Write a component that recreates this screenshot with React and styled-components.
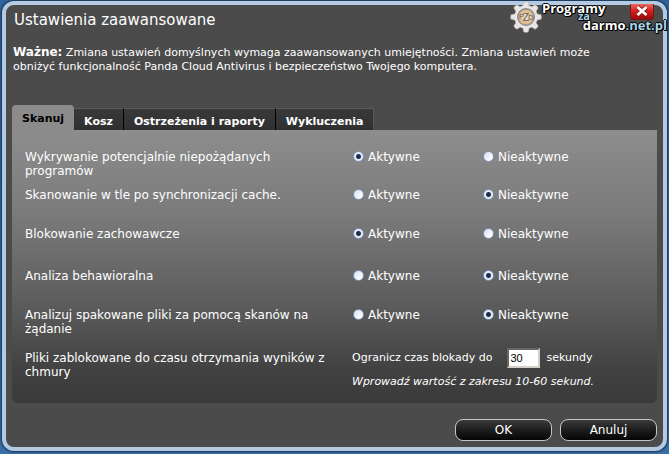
import React, { useState } from 'react';
import styled, { createGlobalStyle, css } from 'styled-components';

const GlobalStyle = createGlobalStyle`
  *, *::before, *::after { box-sizing: border-box; }
  html, body, #root { height: 100%; }
  body {
    margin: 0;
    background: linear-gradient(#31629c, #3a6ea8);
    font-family: 'DejaVu Sans', Verdana, sans-serif;
    font-size: 12px;
    line-height: 14px;
    color: #fff;
  }
  button, input { font: inherit; color: inherit; }
`;

const Desktop = styled.div`
  min-height: 100%;
  display: flex;
  padding: 1px 2px 3px;
`;

const Dialog = styled.main`
  position: relative;
  flex: 1;
  display: flex;
  flex-direction: column;
  padding: 6px;
  border: 4px solid #b4c9e2;
  border-radius: 12px;
  background: #4b4b4b;
  box-shadow: 0 0 2px 1px #17304f;
`;

const Title = styled.h1`
  margin: 0;
  padding: 0 2px;
  font-size: 15px;
  font-weight: 400;
  line-height: 18px;
`;

const Notice = styled.p`
  margin: 16px 0 0;
  padding: 0 1px;
  max-width: 610px;
  font-size: 11px;
  line-height: 14px;
`;

const Strong = styled.strong`
  font-size: 12px;
`;

const TabBar = styled.div`
  display: flex;
  align-items: flex-end;
  margin-top: 31px;
`;

const Tab = styled.button`
  height: 22px;
  padding: 4px 10px 0;
  border: 0;
  border-top: 1px solid #5c5c5c;
  border-right: 1px solid ${(p) => (p.$last ? '#555' : '#000')};
  background: linear-gradient(#393939, #303030);
  font-size: 11px;
  font-weight: 700;
  line-height: 14px;
  ${(p) => p.$active && css`
    height: 25px;
    padding-bottom: 1px;
    border: 0;
    border-radius: 4px 4px 0 0;
    background: #8b8b8b;
    color: #000;
  `}
`;

const Panel = styled.section`
  display: grid;
  grid-template-rows: 38px 39px 42px 39px 43px auto;
  padding: 20px 13px 14px;
  border-radius: 0 0 6px 6px;
  background: linear-gradient(#8d8d8d, #7b7b7b 30%, #5b5b5b 65%, #414141 88%, #3a3a3a);
`;

const Row = styled.div`
  display: grid;
  grid-template-columns: 327px 1fr;
  align-items: start;
`;

const RowLabel = styled.span`
  max-width: ${(p) => (p.$narrow ? '280px' : '320px')};
`;

const Options = styled.div`
  display: grid;
  grid-template-columns: 130px 1fr;
  padding-left: 1px;
`;

const Option = styled.label`
  display: flex;
  align-items: center;
  gap: 4px;
`;

const Radio = styled.input`
  appearance: none;
  width: 11px;
  height: 11px;
  margin: 0 0 1px;
  border: 1px solid #7f94bd;
  border-radius: 50%;
  background: linear-gradient(135deg, #d3dcf0, #fff 80%);
  &:checked {
    background: radial-gradient(circle, #1d2f4b 0 2px, #e6ecf8 3px);
  }
`;

const Limit = styled.div`
  display: flex;
  flex-direction: column;
  gap: 7px;
  font-size: 11px;
`;

const LimitLine = styled.label`
  display: flex;
  align-items: center;
  height: 20px;
  margin-top: -3px;
`;

const NumberBox = styled.input`
  width: 33px;
  height: 20px;
  margin: 0 6px 0 15px;
  padding: 0 1px;
  border: 2px solid;
  border-color: #666 #d4d0c8 #d4d0c8 #666;
  background: #fff;
  color: #000;
  font: 11px 'Liberation Sans', Arial, sans-serif;
`;

const Footer = styled.footer`
  display: flex;
  justify-content: flex-end;
  gap: 8px;
  margin-top: 16px;
`;

const ActionButton = styled.button`
  width: 97px;
  height: 22px;
  padding: 0;
  border: 1px solid #c6c6c6;
  border-radius: 8px;
  background: linear-gradient(#3b3b3b, #1d1d1d 50%, #050505);
`;

const CloseButton = styled.button`
  position: absolute;
  top: -1px;
  right: 9px;
  display: flex;
  justify-content: center;
  width: 24px;
  height: 16px;
  padding: 1px 0 0;
  border: 1px solid #7c1717;
  border-top: 0;
  border-radius: 0 0 3px 3px;
  background: linear-gradient(#e66b60, #d92020 45%, #980a0a);
`;

const Watermark = styled.div`
  position: absolute;
  top: -4px;
  right: -4px;
  display: flex;
  align-items: flex-start;
  pointer-events: none;
`;

const BrandText = styled.div`
  display: grid;
  grid-template-rows: 9px 8px 14px;
  width: 125px;
  font: 700 13px/14px 'Open Sans', sans-serif;
  text-shadow: 1px 0 #000, -1px 0 #000, 0 1px #000, 0 -1px #000, 1px 1px #000;
`;

const BrandMiddle = styled.span`
  z-index: 1;
  padding-left: 36px;
  color: #a8d5e8;
  font-size: 11px;
  line-height: 12px;
`;

const BrandLast = styled.span`
  text-align: right;
`;

const BrandDomain = styled.span`
  color: #a8d5e8;
`;

const Cross = () => (
  <svg width="14" height="12" viewBox="0 0 14 12" aria-hidden="true">
    <path d="M2.5 2 11.5 10M11.5 2 2.5 10" stroke="#8a1010" strokeWidth="4.4" />
    <path d="M2.5 2 11.5 10M11.5 2 2.5 10" stroke="#fff" strokeWidth="3" />
  </svg>
);

const Gear = () => (
  <svg width="32" height="32" viewBox="0 0 34 34" aria-hidden="true">
    <defs>
      <radialGradient id="coin"><stop offset="0" stopColor="#f6e4c4" /><stop offset="1" stopColor="#d6ae78" /></radialGradient>
    </defs>
    <g fill="#e9e5e5" stroke="#aaa5a0" strokeWidth=".5">
      {[0, 45, 90, 135, 180, 225, 270, 315].map((a) => (
        <path key={a} d="M13.5 6 14.5 1Q17 0 19.5 1L20.5 6Z" transform={`rotate(${a} 17 17)`} />
      ))}
    </g>
    <circle cx="17" cy="17" r="12.4" fill="#e9e5e5" />
    <circle cx="17" cy="17" r="8.8" fill="url(#coin)" stroke="#85878f" strokeWidth="1.4" />
    <g fill="#535c70" fontFamily="Liberation Sans, sans-serif" textAnchor="middle">
      <text x="12.2" y="19.5" fontSize="8">P</text>
      <text x="17" y="21" fontSize="11">Z</text>
      <text x="22" y="20.5" fontSize="8">D</text>
    </g>
  </svg>
);

const SETTINGS = [
  { id: 'pup', label: 'Wykrywanie potencjalnie niepożądanych programów', active: true, narrow: true },
  { id: 'background', label: 'Skanowanie w tle po synchronizacji cache.', active: false },
  { id: 'blocking', label: 'Blokowanie zachowawcze', active: true },
  { id: 'behaviour', label: 'Analiza behawioralna', active: false },
  { id: 'packed', label: 'Analizuj spakowane pliki za pomocą skanów na żądanie', active: false },
];

const TABS = ['Skanuj', 'Kosz', 'Ostrzeżenia i raporty', 'Wykluczenia'];

function SettingRow({ id, label, active, narrow }) {
  return (
    <Row role="radiogroup" aria-labelledby={id}>
      <RowLabel id={id} $narrow={narrow}>{label}</RowLabel>
      <Options>
        <Option><Radio type="radio" name={id} defaultChecked={active} />Aktywne</Option>
        <Option><Radio type="radio" name={id} defaultChecked={!active} />Nieaktywne</Option>
      </Options>
    </Row>
  );
}

export default function App() {
  const [tab, setTab] = useState(0);
  return (
    <>
      <GlobalStyle />
      <Desktop>
        <Dialog>
          <Title>Ustawienia zaawansowane</Title>
          <Notice>
            <Strong>Ważne:</Strong> Zmiana ustawień domyślnych wymaga zaawansowanych umiejętności. Zmiana ustawień może obniżyć funkcjonalność Panda Cloud Antivirus i bezpieczeństwo Twojego komputera.
          </Notice>
          <TabBar role="tablist">
            {TABS.map((name, i) => (
              <Tab key={name} type="button" role="tab" aria-selected={tab === i} $active={tab === i} $last={i === TABS.length - 1} onClick={() => setTab(i)}>{name}</Tab>
            ))}
          </TabBar>
          <Panel role="tabpanel">
            {SETTINGS.map((s) => <SettingRow key={s.id} {...s} />)}
            <Row>
              <RowLabel>Pliki zablokowane do czasu otrzymania wyników z chmury</RowLabel>
              <Limit>
                <LimitLine>
                  Ogranicz czas blokady do
                  <NumberBox type="text" inputMode="numeric" defaultValue="30" />
                  sekundy
                </LimitLine>
                <em>Wprowadź wartość z zakresu 10-60 sekund.</em>
              </Limit>
            </Row>
          </Panel>
          <Footer>
            <ActionButton type="button">OK</ActionButton>
            <ActionButton type="button">Anuluj</ActionButton>
          </Footer>
          <CloseButton type="button" aria-label="Zamknij"><Cross /></CloseButton>
          <Watermark>
            <Gear />
            <BrandText>
              <span>Programy</span>
              <BrandMiddle>za</BrandMiddle>
              <BrandLast>darmo<BrandDomain>.net.pl</BrandDomain></BrandLast>
            </BrandText>
          </Watermark>
        </Dialog>
      </Desktop>
    </>
  );
}
